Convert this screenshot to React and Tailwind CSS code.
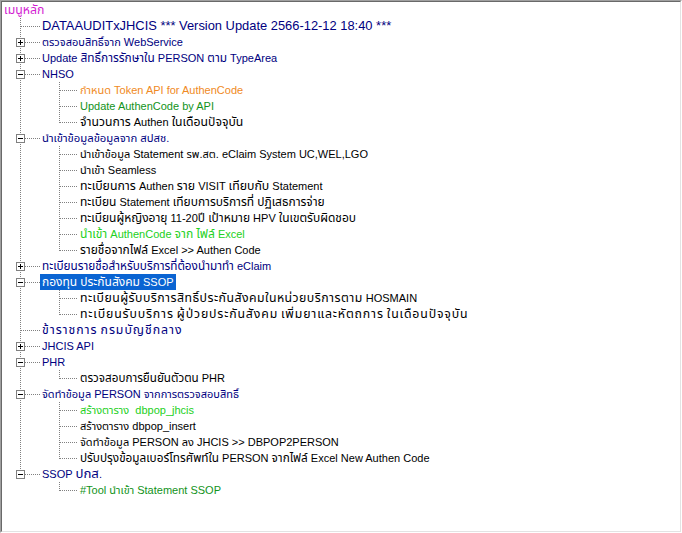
import React from "react";

/* ---- tree look (classic win32 TreeView) ---- */
const UI = {
  font: "font-['Liberation_Sans','Noto_Sans_Thai','Tahoma',sans-serif] text-[11px]",
  row: "flex h-4 items-center whitespace-pre leading-4",
  label: "h-4 px-[2px] leading-4",
  line: "#808080",
  navy: "text-[#000080]",
  black: "text-black",
  orange: "text-[#f08a24]",
  green: "text-[#12931a]",
  lime: "text-[#22d022]",
  selected: "bg-[#0a64d2] text-white",
};

// th = size of the Thai runs (the original font draws Thai wider than Latin)
const menu = [
  { label: "DATAAUDITxJHCIS *** Version Update 2566-12-12 18:40 ***", size: "text-[12.9px]" },
  { label: "ตรวจสอบสิทธิ์จาก WebService", box: "plus" },
  { label: "Update สิทธิ์การรักษาใน PERSON ตาม TypeArea", box: "plus", th: "text-[1.08em]" },
  {
    label: "NHSO",
    box: "minus",
    children: [
      { label: "กำหนด Token API for AuthenCode", color: UI.orange },
      { label: "Update AuthenCode by API", color: UI.green },
      { label: "จำนวนการ Authen ในเดือนปัจจุบัน", th: "text-[1.11em]" },
    ],
  },
  {
    label: "นำเข้าข้อมูลข้อมูลจาก สปสช.",
    box: "minus",
    th: "text-[1.03em]",
    children: [
      { label: "นำเข้าข้อมูล Statement รพ.สต. eClaim System UC,WEL,LGO" },
      { label: "นำเข้า Seamless" },
      { label: "ทะเบียนการ Authen ราย VISIT เทียบกับ Statement", th: "text-[1.12em]" },
      { label: "ทะเบียน Statement เทียบการบริการที่ ปฏิเสธการจ่าย", th: "text-[1.09em]" },
      { label: "ทะเบียนผู้หญิงอายุ 11-20ปี เป้าหมาย HPV ในเขตรับผิดชอบ", th: "text-[1.09em]" },
      { label: "นำเข้า AuthenCode จาก ไฟล์ Excel", color: UI.lime, th: "text-[1.1em]" },
      { label: "รายชื่อจากไฟล์ Excel >> Authen Code", th: "text-[1.09em]" },
    ],
  },
  { label: "ทะเบียนรายชื่อสำหรับบริการที่ต้องนำมาทำ eClaim", box: "plus", th: "text-[1.07em]" },
  {
    label: "กองทุน ประกันสังคม SSOP",
    box: "minus",
    selected: true,
    th: "text-[1.09em]",
    children: [
      {
        label: "ทะเบียนผู้รับบริการสิทธิ์ประกันสังคมในหน่วยบริการตาม HOSMAIN",
        th: "text-[1.12em] tracking-[0.45px]",
      },
      {
        label: "ทะเบียนรับบริการ ผู้ป่วยประกันสังคม เพิ่มยาและหัตถการ ในเดือนปัจจุบัน",
        th: "text-[1.12em] tracking-[0.85px]",
      },
    ],
  },
  { label: "ข้าราชการ กรมบัญชีกลาง", th: "text-[1.12em] tracking-[0.95px]" },
  { label: "JHCIS API", box: "plus" },
  {
    label: "PHR",
    box: "minus",
    children: [{ label: "ตรวจสอบการยืนยันตัวตน PHR", th: "text-[1.06em]" }],
  },
  {
    label: "จัดทำข้อมูล PERSON จากการตรวจสอบสิทธิ์",
    box: "minus",
    children: [
      { label: "สร้างตาราง  dbpop_jhcis", color: UI.lime },
      { label: "สร้างตาราง dbpop_insert" },
      { label: "จัดทำข้อมูล PERSON ลง JHCIS >> DBPOP2PERSON" },
      { label: "ปรับปรุงข้อมูลเบอร์โทรศัพท์ใน PERSON จากไฟล์ Excel New Authen Code", th: "text-[1.07em]" },
    ],
  },
  {
    label: "SSOP ปกส.",
    box: "minus",
    th: "text-[1.2em]",
    children: [{ label: "#Tool นำเข้า Statement SSOP", color: UI.green }],
  },
];

/* ---------- text with Thai runs sized apart ---------- */
function Label({ text, th }) {
  if (!th) return text;
  return text.split(/([\u0E00-\u0E7F]+)/).map((p, i) =>
    /[\u0E00-\u0E7F]/.test(p) ? <span key={i} className={th}>{p}</span> : p
  );
}

/* ---------- dotted connectors + expander box ---------- */
function Guide({ level, last, parentLast, box }) {
  const dot = { stroke: UI.line, strokeWidth: 1, strokeDasharray: "1 1" };
  const w = level === 1 ? 38 : 76;
  return (
    <svg width={w} height={16} className="shrink-0" shapeRendering="crispEdges">
      {level === 1 && (
        <>
          <line x1={18.5} y1={0} x2={18.5} y2={last ? 9 : 16} {...dot} />
          <line x1={box ? 23 : 19} y1={8.5} x2={38} y2={8.5} {...dot} />
          {box && (
            <g>
              <rect x={14.5} y={4.5} width={8} height={8} fill="#fff" stroke={UI.line} />
              <line x1={16} y1={8.5} x2={21} y2={8.5} stroke="#000" />
              {box === "plus" && <line x1={18.5} y1={6} x2={18.5} y2={11} stroke="#000" />}
            </g>
          )}
        </>
      )}
      {level === 2 && (
        <>
          {!parentLast && <line x1={18.5} y1={0} x2={18.5} y2={16} {...dot} />}
          <line x1={57.5} y1={0} x2={57.5} y2={last ? 9 : 16} {...dot} />
          <line x1={58} y1={8.5} x2={76} y2={8.5} {...dot} />
        </>
      )}
    </svg>
  );
}

function Row({ level, last, parentLast, item, color }) {
  return (
    <div className={UI.row}>
      <Guide level={level} last={last} parentLast={parentLast} box={item.box} />
      <span
        className={[UI.label, item.size || "", item.selected ? UI.selected : item.color || color].join(" ")}
      >
        <Label text={item.label} th={item.th} />
      </span>
    </div>
  );
}

export default function App() {
  return (
    <div className="h-[533px] w-[682px] border border-t-[#a0a0a0] border-l-[#a0a0a0] border-r-white border-b-white bg-white">
      <div className="h-full w-full overflow-hidden border border-t-[#696969] border-l-[#696969] border-r-[#e3e3e3] border-b-[#e3e3e3]">
        <div className={["flex flex-col", UI.font].join(" ")}>
          {/* root node */}
          <div className={UI.row}>
            <span className={[UI.label, "text-[#d21ed2]"].join(" ")}>
              <Label text="เมนูหลัก" th="text-[1.12em]" />
            </span>
          </div>

          {menu.map((node, i) => {
            const lastTop = i === menu.length - 1;
            return (
              <React.Fragment key={node.label}>
                <Row level={1} last={lastTop} item={node} color={UI.navy} />
                {(node.children || []).map((c, j) => (
                  <Row
                    key={c.label}
                    level={2}
                    last={j === node.children.length - 1}
                    parentLast={lastTop}
                    item={c}
                    color={UI.black}
                  />
                ))}
              </React.Fragment>
            );
          })}
        </div>
      </div>
    </div>
  );
}
